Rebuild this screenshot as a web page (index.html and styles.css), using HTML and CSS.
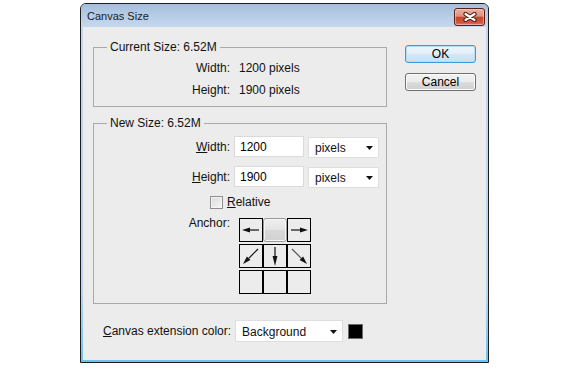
FILE: index.html
```html
<!DOCTYPE html>
<html lang="en">
<head>
    <meta charset="UTF-8">
    <title>Canvas Size</title>
    <link rel="stylesheet" href="styles.css">
</head>
<body>
    <div class="window">
        <div class="titlebar">
            <span class="title">Canvas Size</span>
            <div class="close-btn">
                <svg width="14" height="10" viewBox="0 0 14 10">
                    <path d="M2.5 2 L11.5 8 M11.5 2 L2.5 8" stroke="#4b1610" stroke-width="4.2" stroke-linecap="round" fill="none"/>
                    <path d="M2.5 2 L11.5 8 M11.5 2 L2.5 8" stroke="#ffffff" stroke-width="2.2" stroke-linecap="round" fill="none"/>
                </svg>
            </div>
        </div>

        <div class="client">
            <div class="main-col">
                <!-- Current size -->
                <fieldset class="group group-current">
                    <legend>Current Size: 6.52M</legend>
                    <div class="info-row">
                        <span class="label">Width:</span>
                        <span class="value">1200 pixels</span>
                    </div>
                    <div class="info-row">
                        <span class="label">Height:</span>
                        <span class="value">1900 pixels</span>
                    </div>
                </fieldset>

                <!-- New size -->
                <fieldset class="group group-new">
                    <legend>New Size: 6.52M</legend>
                    <div class="field-row">
                        <label class="label"><u>W</u>idth:</label>
                        <input class="num-input" type="text" value="1200">
                        <div class="dropdown unit-select">
                            <span>pixels</span>
                            <svg width="7" height="4" viewBox="0 0 7 4"><path d="M0 0 H7 L3.5 4 Z" fill="#111"/></svg>
                        </div>
                    </div>
                    <div class="field-row row-height">
                        <label class="label"><u>H</u>eight:</label>
                        <input class="num-input" type="text" value="1900">
                        <div class="dropdown unit-select">
                            <span>pixels</span>
                            <svg width="7" height="4" viewBox="0 0 7 4"><path d="M0 0 H7 L3.5 4 Z" fill="#111"/></svg>
                        </div>
                    </div>
                    <div class="check-row">
                        <span class="checkbox"></span>
                        <span><u>R</u>elative</span>
                    </div>
                    <div class="anchor-row">
                        <span class="label anchor-label">Anchor:</span>
                        <div class="anchor-grid">
                            <div class="cell">
                                <svg width="22" height="22" viewBox="0 0 22 22">
                                    <line x1="19" y1="11" x2="8" y2="11" stroke="#111" stroke-width="1.2"/>
                                    <polygon points="2,11 10,8.6 10,13.4" fill="#111"/>
                                </svg>
                            </div>
                            <div class="cell selected"></div>
                            <div class="cell">
                                <svg width="22" height="22" viewBox="0 0 22 22">
                                    <line x1="3" y1="11" x2="14" y2="11" stroke="#111" stroke-width="1.2"/>
                                    <polygon points="20,11 12,8.6 12,13.4" fill="#111"/>
                                </svg>
                            </div>
                            <div class="cell">
                                <svg width="22" height="22" viewBox="0 0 22 22">
                                    <line x1="18" y1="4" x2="8.7" y2="13.3" stroke="#111" stroke-width="1.2"/>
                                    <polygon points="3,19 10.4,15.1 6.9,11.6" fill="#111"/>
                                </svg>
                            </div>
                            <div class="cell">
                                <svg width="22" height="22" viewBox="0 0 22 22">
                                    <line x1="11" y1="2" x2="11" y2="12" stroke="#111" stroke-width="1.2"/>
                                    <polygon points="11,21 8.6,11 13.4,11" fill="#111"/>
                                </svg>
                            </div>
                            <div class="cell">
                                <svg width="22" height="22" viewBox="0 0 22 22">
                                    <line x1="4" y1="4" x2="13.3" y2="13.3" stroke="#555" stroke-width="1.2"/>
                                    <polygon points="19,19 15.1,11.6 11.6,15.1" fill="#111"/>
                                </svg>
                            </div>
                            <div class="cell"></div>
                            <div class="cell"></div>
                            <div class="cell"></div>
                        </div>
                    </div>
                </fieldset>

                <div class="ext-row">
                    <label class="ext-label"><u>C</u>anvas extension color:</label>
                    <div class="dropdown ext-select">
                        <span>Background</span>
                        <svg width="7" height="4" viewBox="0 0 7 4"><path d="M0 0 H7 L3.5 4 Z" fill="#111"/></svg>
                    </div>
                    <span class="swatch"></span>
                </div>
            </div>

            <div class="button-col">
                <button class="dlg-btn default-btn">OK</button>
                <button class="dlg-btn">Cancel</button>
            </div>
        </div>
    </div>
</body>
</html>
```

FILE: styles.css
```css
/* Page */
* {
    box-sizing: border-box;
}

body {
    margin: 0;
    background: #ffffff;
    font-family: "Liberation Sans", Arial, sans-serif;
    font-size: 12px;
    color: #111;
}

/* Window frame */
.window {
    width: 409px;
    margin: 3px 0 0 80px;
    padding: 0 2px 2px;
    border: 1px solid #1c1c1c;
    border-radius: 6px 6px 0 0;
    background: linear-gradient(#c4d7ed, #b9d4ef 80%, #6ac4ef);
}

.titlebar {
    height: 23px;
    display: flex;
    justify-content: space-between;
    align-items: flex-start;
    background: linear-gradient(#a6bfdd, #b6cce6 50%, #c6d8ed);
    border-radius: 5px 5px 0 0;
    margin: 0 -2px;
    padding: 0 3px 0 6px;
}

.title {
    font-size: 11px;
    line-height: 23px;
    padding-top: 1px;
    color: #1a1a1a;
}

.close-btn {
    width: 31px;
    height: 18px;
    margin-top: 4px;
    display: flex;
    justify-content: center;
    align-items: center;
    border: 1px solid #5e1d15;
    border-radius: 3px;
    background: linear-gradient(#e9b0a2, #dc9281 45%, #c5462e 52%, #cb5a3e 85%, #d9806a);
    box-shadow: inset 0 0 0 1px rgba(255, 220, 210, 0.5);
}

/* Client area */
.client {
    height: 333px;
    display: flex;
    gap: 18px;
    padding: 13px 10px 0;
    background: #ececec;
}

.main-col {
    width: 294px;
}

/* Group boxes */
.group {
    margin: 0;
    min-width: 0;
    border: 1px solid #a9a9a9;
}

.group legend {
    margin-left: 13px;
    padding: 0 3px;
    line-height: 14px;
}

.group-current {
    padding: 3px 0 5px;
}

.group-new {
    margin-top: 9px;
    padding: 6px 0 9px;
}

.label {
    width: 136px;
    flex-shrink: 0;
    text-align: right;
}

.info-row {
    height: 22px;
    display: flex;
    align-items: center;
}

.info-row .value {
    margin-left: 9px;
}

.field-row {
    height: 21px;
    display: flex;
    align-items: center;
}

.row-height {
    margin-top: 9px;
}

.field-row .label {
    margin-right: 4px;
}

.num-input {
    width: 70px;
    height: 21px;
    margin: 0 4px 0 0;
    padding: 0 5px;
    border: 1px solid #dadada;
    background: #fff;
    font-family: inherit;
    font-size: 12px;
    color: #000;
    outline: none;
}

.dropdown {
    height: 21px;
    display: flex;
    justify-content: space-between;
    align-items: center;
    padding: 2px 5px 0 6px;
    border: 1px solid #dedede;
    background: #fff;
}

.unit-select {
    width: 71px;
    margin-top: 1px;
}

/* Checkbox */
.check-row {
    height: 16px;
    margin-top: 7px;
    padding-left: 116px;
    display: flex;
    align-items: center;
    gap: 4px;
}

.checkbox {
    width: 13px;
    height: 13px;
    border: 1px solid #8e8f8f;
    background: linear-gradient(135deg, #d9d9d9, #f7f7f7);
    box-shadow: inset 0 0 0 1px #f4f4f4;
}

/* Anchor grid */
.anchor-row {
    margin-top: 8px;
    display: flex;
    align-items: flex-start;
}

.anchor-label {
    margin-top: -2px;
    line-height: 14px;
}

.anchor-grid {
    margin-left: 9px;
    display: grid;
    grid-template-columns: repeat(3, 24px);
    grid-auto-rows: 24px;
    row-gap: 2px;
}

.cell {
    border: 1px solid #000;
    background: #ececec;
}

.cell svg {
    display: block;
}

.cell.selected {
    border: 1px solid #9a9a9a;
    border-radius: 3px;
    background: linear-gradient(#eeeeee, #e4e4e4 50%, #d8d8d8 52%, #d2d2d2);
    box-shadow: inset 0 0 0 1px #f6f6f6;
}

/* Extension colour */
.ext-row {
    height: 22px;
    margin-top: 16px;
    padding-left: 10px;
    display: flex;
    align-items: center;
}

.ext-label {
    white-space: nowrap;
    margin-right: 4px;
}

.ext-select {
    width: 108px;
    height: 22px;
}

.swatch {
    width: 15px;
    height: 15px;
    margin-left: 5px;
    background: #000;
    border: 1px solid #6b6b6b;
}

/* Buttons */
.button-col {
    width: 71px;
    padding-top: 5px;
    display: flex;
    flex-direction: column;
    gap: 10px;
}

.dlg-btn {
    height: 18px;
    padding: 0;
    border: 1px solid #707070;
    border-radius: 3px;
    font-family: inherit;
    font-size: 12px;
    line-height: 16px;
    color: #000;
    background: linear-gradient(#f2f2f2, #ebebeb 50%, #dddddd 52%, #cfcfcf);
    box-shadow: inset 0 0 0 1px #fbfbfb;
}

.default-btn {
    border-color: #3c9ae0;
    background: linear-gradient(#eef6fc, #e2eef8 50%, #d3e7f6 52%, #c9e1f4);
    box-shadow: inset 0 0 0 1px #b4dcf6;
}
```
